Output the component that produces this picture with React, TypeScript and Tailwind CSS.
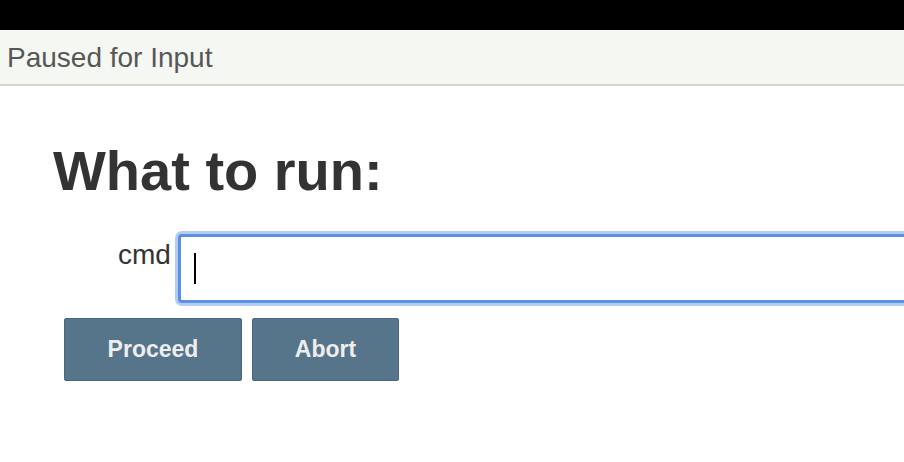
import React from "react";

const ActionButton: React.FC<{ label: string; width: string }> = ({ label, width }) => (
  <button
    className={`${width} h-[63px] rounded-[2px] border border-[#4a687d] bg-[#56748a] text-[23px] font-bold text-[#eeeeee]`}
  >
    {label}
  </button>
);

export default function App() {
  return (
    <div className="w-screen h-screen overflow-hidden bg-white font-['Liberation_Sans',Arial,sans-serif]">
      <div className="h-[30px] bg-black" />
      <div className="h-[56px] border-b-2 border-[#d4d4d2] bg-[#f5f7f2] px-[7px] pt-[2px] text-[28px] leading-[52px] text-[#575757]">
        Paused for Input
      </div>

      <div className="pl-[53px]">
        <h1 className="mt-[57px] text-[56px] font-bold leading-none text-[#333333]">What to run:</h1>

        <div className="mt-[35px] flex items-start pl-[65px]">
          <label className="mt-[7px] text-[28px] leading-[27px] text-[#333333]">cmd</label>
          <div className="ml-[7px] flex h-[69px] w-[760px] shrink-0 items-center rounded-[4px] border-[3px] border-[#5b8fe2] bg-white pl-[13px] shadow-[0_0_0_3px_#b4ccf4]">
            <span className="block h-[31px] w-[2px] bg-black" />
          </div>
        </div>

        <div className="mt-[15px] ml-[11px] flex gap-[10px]">
          <ActionButton label="Proceed" width="w-[178px]" />
          <ActionButton label="Abort" width="w-[147px]" />
        </div>
      </div>
    </div>
  );
}
